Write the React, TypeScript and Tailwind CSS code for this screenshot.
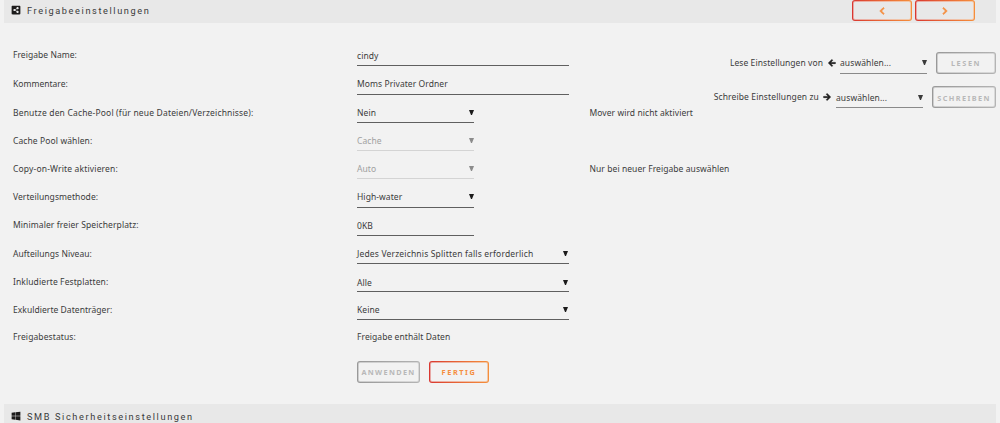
import React from "react";
import { FaArrowLeft, FaArrowRight, FaChevronLeft, FaChevronRight, FaShareAltSquare, FaWindows } from "react-icons/fa";

interface Row {
  label: string;
  value: string;
  height: string;
  labelClass: string;
  valueClass?: string;
  field?: string;
  select?: boolean;
  disabled?: boolean;
  hint?: string;
}

const rows: Row[] = [
  { label: "Freigabe Name:", value: "cindy", height: "h-[29px]", labelClass: "leading-[28px] tracking-[0.05px]", field: "w-[211.5px] h-[25px] pt-[6px]" },
  { label: "Kommentare:", value: "Moms Privater Ordner", height: "h-7", labelClass: "leading-[28px] tracking-[0.02px]", field: "w-[211.5px] h-[25px] pt-[5px]" },
  { label: "Benutze den Cache-Pool (für neue Dateien/Verzeichnisse):", value: "Nein", height: "h-7", labelClass: "leading-[30px] tracking-[0.17px]", field: "w-[117px] h-[25px] pt-[7px]", select: true, hint: "Mover wird nicht aktiviert" },
  { label: "Cache Pool wählen:", value: "Cache", height: "h-7", labelClass: "leading-[30px] tracking-[0.1px]", field: "w-[117px] h-[25px] pt-[7px]", select: true, disabled: true },
  { label: "Copy-on-Write aktivieren:", value: "Auto", height: "h-[29px]", labelClass: "leading-[30px] tracking-[0.16px]", field: "w-[117px] h-[25px] pt-[7px]", select: true, disabled: true, hint: "Nur bei neuer Freigabe auswählen" },
  { label: "Verteilungsmethode:", value: "High-water", height: "h-7", labelClass: "leading-[28px] tracking-[0.07px]", field: "w-[117px] h-[24.5px] pt-[5px]", select: true },
  { label: "Minimaler freier Speicherplatz:", value: "0KB", height: "h-7", labelClass: "leading-[28px] tracking-[0.1px]", field: "w-[117px] h-[25px] pt-[7px]" },
  { label: "Aufteilungs Niveau:", value: "Jedes Verzeichnis Splitten falls erforderlich", height: "h-[29px]", labelClass: "leading-[30px] tracking-[0.05px]", valueClass: "tracking-[0.17px]", field: "w-[211.5px] h-[25px] pt-[7px]", select: true },
  { label: "Inkludierte Festplatten:", value: "Alle", height: "h-[27px]", labelClass: "leading-[28px] tracking-[0.1px]", field: "w-[211.5px] h-[24px] pt-[7px]", select: true },
  { label: "Exkuldierte Datenträger:", value: "Keine", height: "h-[27px]", labelClass: "leading-[29px] tracking-[0.05px]", field: "w-[211.5px] h-[25px] pt-[7px]", select: true },
  { label: "Freigabestatus:", value: "Freigabe enthält Daten", height: "h-7", labelClass: "leading-[30px] tracking-[0.1px]" },
];

function Caret() {
  return (
    <svg viewBox="0 0 5 5" className="w-[5px] h-[5px] mb-[2px] mr-[0.5px] shrink-0" fill="currentColor">
      <path d="M0 0h5L3 5H2z" />
    </svg>
  );
}

interface ButtonProps {
  children: React.ReactNode;
  className: string;
  fill?: string;
  disabled?: boolean;
}

function GradientButton({ children, className, fill = "bg-[#f2f2f2]", disabled }: ButtonProps) {
  return (
    <button
      className={`flex rounded-[3px] p-[2px] font-bold font-['Noto_Sans',sans-serif] text-[7.3px] bg-linear-to-r ${disabled ? "from-[#999] to-[#b4b4b4] text-[#b8b8b8]" : "from-[#d93630] to-[#f58f3c] text-[#f58d3d]"} ${className}`}
    >
      <span className={`flex-1 h-full flex items-center justify-center rounded-[1px] shadow-[0_0_0_1px_rgba(242,242,242,0.6)] ${fill}`}>{children}</span>
    </button>
  );
}

export default function App() {
  return (
    <div className="h-[423px] overflow-hidden bg-[#f2f2f2] px-1 text-[#3b3b3b] text-[8.5px] font-['Noto_Sans',sans-serif]">
      {/* Share settings title */}
      <header className="h-[23px] bg-[#e8e8e8] flex items-start justify-between pl-[7px] pr-[21px]">
        <div className="flex items-center h-5">
          <FaShareAltSquare size={10} className="text-[#1c1b1b]" />
          <h1 className="ml-[6px] pt-px font-[Roboto,sans-serif] text-[9.2px] tracking-[1.6px]">Freigabeeinstellungen</h1>
        </div>
        <div className="flex gap-[3px]">
          <GradientButton fill="bg-[#e8e8e8]" className="w-[60px] h-[21px]"><FaChevronLeft size={8} stroke="currentColor" strokeWidth={45} /></GradientButton>
          <GradientButton fill="bg-[#e8e8e8]" className="w-[60px] h-[21px]"><FaChevronRight size={8} stroke="currentColor" strokeWidth={45} /></GradientButton>
        </div>
      </header>

      <main className="h-[381px] pt-[18px] flex">
        <section className="w-[700px] pl-[9px]">
          {rows.map((row) => (
            <div key={row.label} className={`grid grid-cols-[344px_232px_1fr] whitespace-nowrap ${row.height}`}>
              <div className={row.labelClass}>{row.label}</div>
              {row.field ? (
                <div className={`flex items-center justify-between border-b ${row.field} ${row.disabled ? "text-[#a0a0a0] border-[#d4d4d4]" : "border-[#606060]"}`}>
                  <span className={row.valueClass ?? "tracking-[0.07px]"}>{row.value}</span>
                  {row.select && <span className={row.disabled ? "text-[#8c8c8c]" : "text-[#1c1b1b]"}><Caret /></span>}
                </div>
              ) : (
                <div className="leading-[30px] tracking-[0.07px]">{row.value}</div>
              )}
              <div className="leading-[30px] pl-[0.5px] tracking-[0.07px]">{row.hint}</div>
            </div>
          ))}
          <div className="flex gap-[9px] pl-[344px] pt-[11px]">
            <GradientButton disabled className="w-[63px] h-[22px] tracking-[1.35px]"><span className="pt-px">ANWENDEN</span></GradientButton>
            <GradientButton className="w-[60px] h-[22px] tracking-[1.6px]"><span className="pt-px">FERTIG</span></GradientButton>
          </div>
        </section>

        {/* Copy settings from / to another share */}
        <aside className="flex-1 pt-[11px] flex flex-col gap-3 items-end whitespace-nowrap">
          <div className="flex items-center h-[22px]">
            <span className="pt-px tracking-[0.07px]">Lese Einstellungen von</span>
            <FaArrowLeft size={8} stroke="currentColor" strokeWidth={40} className="ml-[5px] mr-[4px] overflow-visible text-[#1c1b1b]" />
            <div className="w-[87px] h-[21px] pt-[2px] border-b border-[#8a8a8a] flex items-center justify-between tracking-[0.1px]">
              auswählen...
              <Caret />
            </div>
            <GradientButton disabled className="w-[60px] h-[22px] ml-[9px] tracking-[1.6px]"><span className="pt-px">LESEN</span></GradientButton>
          </div>
          <div className="flex items-center h-[22px]">
            <span className="pt-px tracking-[0.12px]">Schreibe Einstellungen zu</span>
            <FaArrowRight size={8} stroke="currentColor" strokeWidth={40} className="ml-[4px] mr-[5px] overflow-visible text-[#1c1b1b]" />
            <div className="w-[87px] h-[21px] pt-[4px] border-b border-[#8a8a8a] flex items-center justify-between tracking-[0.1px]">
              auswählen...
              <Caret />
            </div>
            <GradientButton disabled className="w-[64px] h-[22px] ml-[9px] tracking-[1.4px]"><span className="pt-[2px]">SCHREIBEN</span></GradientButton>
          </div>
        </aside>
      </main>

      {/* SMB security title */}
      <header className="h-[24px] bg-[#e8e8e8] flex items-center pl-[7px]">
        <FaWindows size={10} className="text-[#1c1b1b]" />
        <h1 className="ml-[6px] pt-px font-[Roboto,sans-serif] text-[9.2px] tracking-[1.62px]">SMB Sicherheitseinstellungen</h1>
      </header>
    </div>
  );
}
